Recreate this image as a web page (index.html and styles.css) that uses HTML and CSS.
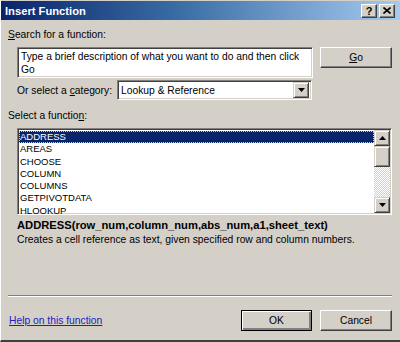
FILE: index.html
```html
<!DOCTYPE html>
<html lang="en">
<head>
    <meta charset="UTF-8">
    <title>Insert Function</title>
    <link rel="stylesheet" href="styles.css">
</head>
<body>

    <div class="window">
        <div class="titlebar">
            <span class="title">Insert Function</span>
            <div class="title-buttons">
                <span class="tbtn help">?</span>
                <span class="tbtn">
                    <svg width="8" height="7" viewBox="0 0 8 7"><path d="M0.5 0.5 L7.5 6.5 M7.5 0.5 L0.5 6.5" stroke="#000" stroke-width="1.6"/></svg>
                </span>
            </div>
        </div>

        <div class="content">
            <div class="label first"><u>S</u>earch for a function:</div>

            <div class="search-row">
                <div class="textbox">Type a brief description of what you want to do and then click Go</div>
                <button class="btn go"><u>G</u>o</button>
            </div>

            <div class="category-row">
                <span class="cat-label">Or select a <u>c</u>ategory:</span>
                <div class="select">
                    <span>Lookup &amp; Reference</span>
                    <span class="drop">
                        <svg width="7" height="4" viewBox="0 0 7 4"><polygon points="0,0 7,0 3.5,4" fill="#000"/></svg>
                    </span>
                </div>
            </div>

            <div class="label">Select a functio<u>n</u>:</div>

            <div class="listbox">
                <ul class="items">
                    <li class="selected">ADDRESS</li>
                    <li>AREAS</li>
                    <li>CHOOSE</li>
                    <li>COLUMN</li>
                    <li>COLUMNS</li>
                    <li>GETPIVOTDATA</li>
                    <li>HLOOKUP</li>
                </ul>
                <div class="scrollbar">
                    <span class="sb-btn">
                        <svg width="7" height="4" viewBox="0 0 7 4"><polygon points="0,4 7,4 3.5,0" fill="#000"/></svg>
                    </span>
                    <span class="sb-thumb"></span>
                    <span class="sb-track"></span>
                    <span class="sb-btn">
                        <svg width="7" height="4" viewBox="0 0 7 4"><polygon points="0,0 7,0 3.5,4" fill="#000"/></svg>
                    </span>
                </div>
            </div>

            <div class="signature">ADDRESS(row_num,column_num,abs_num,a1,sheet_text)</div>
            <div class="description">Creates a cell reference as text, given specified row and column numbers.</div>

            <div class="separator"></div>

            <div class="footer">
                <a href="#" class="help-link">Help on this function</a>
                <div class="footer-buttons">
                    <button class="btn default">OK</button>
                    <button class="btn">Cancel</button>
                </div>
            </div>
        </div>
    </div>

</body>
</html>
```

FILE: styles.css
```css
* {
    margin: 0;
    padding: 0;
    box-sizing: border-box;
}

body {
    font-family: "Liberation Sans", Arial, sans-serif;
    font-size: 10.3px;
    color: #000;
    background: #d4d0c8;
}

.window {
    width: 400px;
    height: 342px;
    background: #d4d0c8;
    border-top: 1px solid #d4d0c8;
    border-left: 1px solid #fff;
    border-bottom: 2px solid #404040;
    display: flex;
    flex-direction: column;
}

/* Title bar */
.titlebar {
    height: 19px;
    background: linear-gradient(to right, #0a246a, #3a6ea5 45%, #a6caf0);
    display: flex;
    align-items: center;
    justify-content: space-between;
    padding: 0 5px 0 4px;
}

.title {
    color: #fff;
    font-weight: bold;
    font-size: 11.2px;
}

.title-buttons {
    display: flex;
    gap: 2px;
}

.tbtn {
    width: 16px;
    height: 14px;
    background: #d4d0c8;
    border: 1px solid;
    border-color: #fff #404040 #404040 #fff;
    box-shadow: inset -1px -1px #808080;
    display: flex;
    align-items: center;
    justify-content: center;
    font-weight: bold;
    font-size: 11px;
    line-height: 12px;
}

/* Dialog body */
.content {
    flex: 1;
    padding: 0 8px 0 7px;
    display: flex;
    flex-direction: column;
}

.label {
    line-height: 13px;
    margin-top: 9px;
}

.label.first {
    margin-top: 8px;
}

.search-row {
    display: flex;
    align-items: flex-start;
    justify-content: space-between;
    margin-top: 6px;
    padding-left: 9px;
}

.textbox,
.select,
.listbox {
    background: #fff;
    border: 1px solid;
    border-color: #808080 #fff #fff #808080;
    box-shadow: inset 1px 1px #404040, inset -1px -1px #d4d0c8;
}

.textbox {
    width: 296px;
    height: 31px;
    padding: 2px 3px;
    line-height: 13px;
}

.btn {
    font-family: inherit;
    font-size: 10.3px;
    width: 72px;
    height: 21px;
    background: #d4d0c8;
    border: 1px solid;
    border-color: #fff #404040 #404040 #fff;
    box-shadow: inset -1px -1px #808080, inset 1px 1px #d4d0c8;
    color: #000;
}

.btn.default {
    width: 71px;
    border-color: #000;
    box-shadow: inset 1px 1px #fff, inset -2px -2px #808080;
}

.category-row {
    display: flex;
    align-items: center;
    margin-top: 2px;
    padding-left: 9px;
}

.cat-label {
    width: 100px;
}

.select {
    width: 195px;
    height: 20px;
    display: flex;
    align-items: center;
    justify-content: space-between;
    padding: 2px 2px 2px 3px;
}

.drop {
    width: 16px;
    height: 16px;
    background: #d4d0c8;
    border: 1px solid;
    border-color: #d4d0c8 #404040 #404040 #d4d0c8;
    box-shadow: inset 1px 1px #fff, inset -1px -1px #808080;
    display: flex;
    align-items: center;
    justify-content: center;
}

/* Function list */
.listbox {
    margin: 6px 0 0 9px;
    width: 375px;
    height: 87px;
    padding: 1px;
    display: flex;
}

.items {
    list-style: none;
    flex: 1;
    font-size: 9.5px;
    line-height: 12.3px;
    padding-top: 1px;
}

.items li {
    padding-left: 1px;
    height: 12.3px;
}

.items li.selected {
    background: #0a246a;
    color: #fff;
    outline: 1px dotted #d4d0c8;
    outline-offset: -1px;
}

.scrollbar {
    width: 16px;
    display: flex;
    flex-direction: column;
}

.sb-btn,
.sb-thumb {
    height: 16px;
    background: #d4d0c8;
    border: 1px solid;
    border-color: #d4d0c8 #404040 #404040 #d4d0c8;
    box-shadow: inset 1px 1px #fff, inset -1px -1px #808080;
    display: flex;
    align-items: center;
    justify-content: center;
}

.sb-thumb {
    height: 21px;
}

.sb-track {
    flex: 1;
    background: repeating-conic-gradient(#fff 0 25%, #d4d0c8 0 50%) 0 0 / 2px 2px;
}

.signature {
    font-weight: bold;
    font-size: 11.2px;
    margin: 4px 0 0 9px;
    line-height: 13px;
}

.description {
    margin-left: 9px;
    line-height: 15px;
}

.separator {
    margin-top: auto;
    height: 2px;
    border-top: 1px solid #808080;
    border-bottom: 1px solid #fff;
}

.footer {
    display: flex;
    align-items: center;
    justify-content: space-between;
    margin: 13px 0 9px;
}

.help-link {
    color: #2020c0;
    text-decoration: underline;
    padding-left: 1px;
}

.footer-buttons {
    display: flex;
    gap: 8px;
}
```
